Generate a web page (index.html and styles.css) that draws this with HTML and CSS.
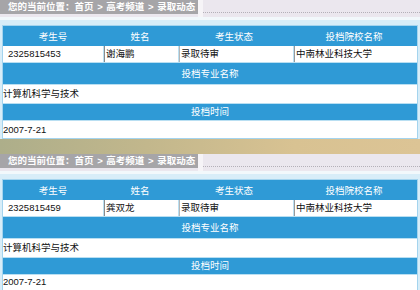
FILE: index.html
```html
<!DOCTYPE html>
<html lang="zh-CN">
<head>
<meta charset="utf-8">
<title>录取动态</title>
<link rel="stylesheet" href="styles.css">
</head>
<body>
<div class="page">
  <section class="sec">
    <div class="topbar">
      <div class="crumb">您的当前位置：首页 &gt; 高考频道 &gt; 录取动态</div>
      <div class="sep"></div>
      <div class="fill"><div class="dots"></div></div>
    </div>
    <div class="gap"></div>
    <div class="frame">
      <div class="tbl">
        <div class="row hdr cols">
          <div>考生号</div><div>姓名</div><div>考生状态</div><div>投档院校名称</div>
        </div>
        <div class="row data cols">
          <div class="c1">2325815453</div><div class="c2">谢海鹏</div><div class="c3">录取待审</div><div class="c4">中南林业科技大学</div>
        </div>
        <div class="row blue h21">投档专业名称</div>
        <div class="row white h18">计算机科学与技术</div>
        <div class="row blue h16">投档时间</div>
        <div class="row white h17">2007-7-21</div>
      </div>
    </div>
  </section>
  <div class="band"></div>
  <section class="sec">
    <div class="topbar">
      <div class="crumb">您的当前位置：首页 &gt; 高考频道 &gt; 录取动态</div>
      <div class="sep"></div>
      <div class="fill"><div class="dots"></div></div>
    </div>
    <div class="gap"></div>
    <div class="frame">
      <div class="tbl">
        <div class="row hdr cols">
          <div>考生号</div><div>姓名</div><div>考生状态</div><div>投档院校名称</div>
        </div>
        <div class="row data cols">
          <div class="c1">2325815459</div><div class="c2">龚双龙</div><div class="c3">录取待审</div><div class="c4">中南林业科技大学</div>
        </div>
        <div class="row blue h21">投档专业名称</div>
        <div class="row white h18">计算机科学与技术</div>
        <div class="row blue h16">投档时间</div>
        <div class="row white h17 last">2007-7-21</div>
      </div>
    </div>
  </section>
</div>
</body>
</html>
```

FILE: styles.css
```css
html, body {
  margin: 0;
  padding: 0;
  background: #d8edf8;
}
body {
  width: 420px;
  height: 290px;
  overflow: hidden;
  font-family: "Liberation Sans", "Noto Sans CJK SC", sans-serif;
  font-size: 9.5px;
  color: #111;
}
.page {
  display: flex;
  flex-direction: column;
}
.sec {
  display: flex;
  flex-direction: column;
  background: #d8edf8;
}
.topbar {
  display: flex;
  height: 17px;
  background: #ebe7ee;
}
.crumb {
  width: 198px;
  height: 14px;
  box-sizing: border-box;
  padding-left: 8px;
  background: #a6a5a8;
  color: #fff;
  font-weight: bold;
  line-height: 14px;
  white-space: nowrap;
  word-spacing: 1px;
  overflow: hidden;
}
.sep {
  width: 5px;
  background: #f6f4f7;
}
.fill {
  flex: 1;
  display: flex;
  flex-direction: column;
  padding-top: 12px;
}
.dots {
  border-top: 1px dotted #b4b0b8;
}
.gap {
  height: 8px;
  background: linear-gradient(#f2f8fb 0 3px, #d8edf8 3px);
}
.frame {
  padding: 0 2px;
}
.tbl {
  border: 1px solid #a4d4ee;
  display: flex;
  flex-direction: column;
  background: #b9dff2;
}
.row {
  box-sizing: border-box;
}
.cols {
  display: grid;
  grid-template-columns: 100px 74px 114px 1fr;
}
.hdr {
  height: 20px;
  background: #2f9ad6;
  color: #fff;
  text-align: center;
  align-items: center;
}
.data {
  height: 16px;
  column-gap: 1px;
  background: #b9dff2;
}
.data > div {
  background: #fff;
  line-height: 16px;
  white-space: nowrap;
}
.c1 { padding-left: 5px; }
.c2 { border-left: 1px solid #8c8c8c; padding-left: 1px; }
.c3 { border-left: 1px solid #b6b6b6; padding-left: 1px; }
.c4 { border-left: 1px solid #9a9a9a; padding-left: 1px; }
.blue {
  background: #2f9ad6;
  color: #fff;
  text-align: center;
  margin-top: 1px;
}
.white {
  background: #fff;
  margin-top: 1px;
}
.h21 { height: 21px; line-height: 21px; }
.h18 { height: 18px; line-height: 18px; }
.h17 { height: 17px; line-height: 17px; }
.h16 { height: 16px; line-height: 16px; }
.last { line-height: 14px; }
.band {
  height: 15px;
  background: linear-gradient(90deg, #adae8a 0%, #c2b78c 35%, #d8c292 70%, #dcc495 100%);
}
```
